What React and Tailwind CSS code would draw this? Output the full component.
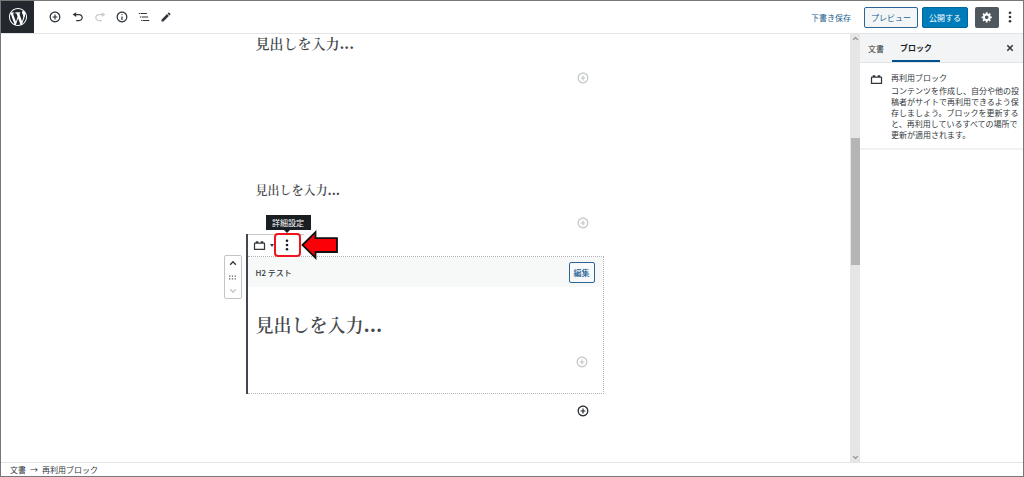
import React from "react";

const P = {
  wordpress:
    "M20 10c0-5.51-4.49-10-10-10C4.48 0 0 4.49 0 10c0 5.52 4.48 10 10 10 5.51 0 10-4.48 10-10zM7.78 15.37L4.37 6.22c.55-.02 1.17-.08 1.17-.08.5-.06.44-1.13-.06-1.11 0 0-1.45.11-2.37.11-.18 0-.37 0-.58-.01C4.12 2.69 6.87 1.11 10 1.11c2.33 0 4.45.87 6.05 2.34-.68-.11-1.65.39-1.65 1.58 0 .74.45 1.36.9 2.1.35.61.55 1.36.55 2.46 0 1.49-1.4 5-1.4 5l-3.03-8.37c.54-.02.82-.17.82-.17.5-.05.44-1.25-.06-1.22 0 0-1.44.12-2.38.12-.87 0-2.33-.12-2.33-.12-.5-.03-.56 1.2-.06 1.22l.92.08 1.26 3.41zM17.41 10c.24-.64.74-1.87.43-4.25.7 1.29 1.05 2.71 1.05 4.25 0 3.29-1.73 6.24-4.4 7.78.97-2.59 1.94-5.2 2.92-7.78zM6.1 18.09C3.12 16.65 1.11 13.53 1.11 10c0-1.3.23-2.48.72-3.59C3.25 10.3 4.67 14.2 6.1 18.09zm4.03-6.63l2.58 6.98c-.86.29-1.76.45-2.71.45-.79 0-1.57-.11-2.29-.33.81-2.38 1.62-4.74 2.42-7.1z",
  insert:
    "M10 1c-5 0-9 4-9 9s4 9 9 9 9-4 9-9-4-9-9-9zm0 16c-3.9 0-7-3.1-7-7s3.1-7 7-7 7 3.1 7 7-3.1 7-7 7zm1-11H9v3H6v2h3v3h2v-3h3V9h-3V6z",
  undo: "M12 5H7V2L1 6l6 4V7h5c2.2 0 4 1.8 4 4s-1.8 4-4 4H7v2h5c3.3 0 6-2.7 6-6s-2.7-6-6-6z",
  redo: "M8 5h5V2l6 4-6 4V7H8c-2.2 0-4 1.8-4 4s1.8 4 4 4h5v2H8c-3.3 0-6-2.7-6-6s2.7-6 6-6z",
  info: "M9 15h2V9H9v6zm1-10c-.5 0-1 .5-1 1s.5 1 1 1 1-.5 1-1-.5-1-1-1zm0-4c-5 0-9 4-9 9s4 9 9 9 9-4 9-9-4-9-9-9zm0 16c-3.9 0-7-3.1-7-7s3.1-7 7-7 7 3.1 7 7-3.1 7-7 7z",
  gear: "M18 12h-2.18c-.17.7-.44 1.35-.81 1.93l1.54 1.54-2.1 2.1-1.54-1.54c-.58.36-1.23.63-1.91.79V19H8v-2.18c-.68-.16-1.33-.43-1.91-.79l-1.54 1.54-2.12-2.12 1.54-1.54c-.36-.58-.63-1.23-.79-1.91H1V9.03h2.17c.16-.7.44-1.35.8-1.94L2.43 5.55l2.1-2.1 1.54 1.54c.58-.37 1.24-.64 1.93-.81V2h3v2.18c.68.16 1.33.43 1.91.79l1.54-1.54 2.12 2.12-1.54 1.54c.36.59.64 1.24.8 1.94H18V12zm-8.5 1.5c1.66 0 3-1.34 3-3s-1.34-3-3-3-3 1.34-3 3 1.34 3 3 3z",
  nav: "M5 5H3v2h2V5zm3 8h11v-2H8v2zm9-8H6v2h11V5zM7 11H5v2h2v-2zm0 8h2v-2H7v2zm3-2v2h11v-2H10z",
  pencil:
    "M3 17.25V21h3.75L17.81 9.94l-3.75-3.75L3 17.25zM20.71 7.04c.39-.39.39-1.02 0-1.41l-2.34-2.34c-.39-.39-1.02-.39-1.41 0l-1.83 1.83 3.75 3.75 1.83-1.83z",
  block:
    "M19 7h-1V5h-4v2h-4V5H6v2H5c-1.1 0-2 .9-2 2v10h18V9c0-1.1-.9-2-2-2zm0 10H5V9h14v8z",
};

function Icon({ name, box = 20, className }) {
  return (
    <svg viewBox={`0 0 ${box} ${box}`} className={className} fill="currentColor" aria-hidden="true">
      <path d={P[name]} />
    </svg>
  );
}

function Dots({ className }) {
  return (
    <svg viewBox="0 0 4 12" className={className} fill="currentColor" aria-hidden="true">
      <circle cx="2" cy="1.7" r="1.3" />
      <circle cx="2" cy="6" r="1.3" />
      <circle cx="2" cy="10.3" r="1.3" />
    </svg>
  );
}

function Chevron({ down, className }) {
  return (
    <svg viewBox="0 0 8 6" className={className} fill="none" stroke="currentColor" strokeWidth="1.3" aria-hidden="true">
      <path d={down ? "M1.2 1.3 4 4.2 6.8 1.3" : "M1.2 4.7 4 1.8 6.8 4.7"} />
    </svg>
  );
}

function AddRow({ className }) {
  return (
    <div className="flex justify-end pr-[15px]">
      <button aria-label="ブロックを追加" className={className}>
        <Icon name="insert" className="size-3" />
      </button>
    </div>
  );
}

const tools = [
  ["ブロックの追加", "insert", 20, "size-3 text-[#2f353b]"],
  ["元に戻す", "undo", 20, "size-3 text-[#2f353b]"],
  ["やり直す", "redo", 20, "size-3 text-[#c9cbcd]"],
  ["コンテンツ構造", "info", 20, "size-3 text-[#2f353b]"],
  ["ブロックナビゲーション", "nav", 24, "size-3.5 text-[#2f353b]"],
  ["モード", "pencil", 24, "size-3 text-[#2f353b]"],
];

const serif = "font-['DejaVu_Serif','Noto_Serif_CJK_JP','Noto_Sans_CJK_JP',serif] font-semibold text-[#45484c]";

export default function App() {
  return (
    <div className="flex h-screen flex-col overflow-hidden border border-[#777] bg-white font-['Noto_Sans_CJK_JP',sans-serif] text-[8px] leading-[11px] text-[#32373c]">
      <header className="flex h-[33px] shrink-0 items-center border-b border-[#e2e4e7] pr-[11px]">
        <a href="#" aria-label="投稿一覧" className="flex h-8 w-[33px] items-center justify-center self-start bg-[#23282e] text-white">
          <Icon name="wordpress" className="size-[18px]" />
        </a>
        <div className="ml-[9px] flex flex-1 items-center">
          {tools.map(([label, name, box, cls]) => (
            <button key={name} aria-label={label} className="flex w-[22px] items-center justify-center first:w-6">
              <Icon name={name} box={box} className={cls} />
            </button>
          ))}
        </div>
        <button className="mr-[13px] text-[#1b5e8f]">下書き保存</button>
        <button className="mr-1 h-[21px] w-[54px] rounded-[2px] border border-[#2c6593] bg-[#f3f5f6] text-[#1b5e8f]">プレビュー</button>
        <button className="mr-[7px] h-[21px] w-[46px] rounded-[2px] border border-[#006799] bg-[#007cba] text-white">公開する</button>
        <button aria-label="設定" className="mr-[9px] flex h-[21px] w-6 items-center justify-center rounded-[2px] bg-[#50575d] text-white">
          <Icon name="gear" className="size-3" />
        </button>
        <button aria-label="ツールと設定" className="text-[#2f353b]">
          <Dots className="h-3 w-1" />
        </button>
      </header>

      <div className="flex min-h-0 flex-1">
        <main className="min-w-0 flex-1 overflow-hidden pr-[2px]">
          <div className="mx-auto w-[358px]">
            <h2 className={`${serif} pl-[10px] text-[14px] leading-5`}>見出しを入力...</h2>
            <div className="pt-[18px]">
              <AddRow className="text-[#c4c7ca]" />
            </div>
            <h3 className={`${serif} mt-[99px] pl-[10px] text-[12px] leading-4`}>見出しを入力...</h3>
            <div className="pt-[18px]">
              <AddRow className="text-[#c4c7ca]" />
            </div>

            <section className="relative mt-[5px] border-l-2 border-[#40474e]">
              <div className="flex h-[22px] w-14 items-center border-t border-[#c4c7ca] pl-1">
                <button aria-label="ブロックタイプを変更" className="flex items-center gap-[3px]">
                  <Icon name="block" box={24} className="size-[15px]" />
                  <svg viewBox="0 0 4 3" className="h-[3px] w-1" fill="currentColor" aria-hidden="true">
                    <path d="M0 0h4L2 3z" />
                  </svg>
                </button>
              </div>
              <div className="border border-l-0 border-dotted border-[#b0b4b8] pb-[25px]">
                <div className="flex h-[30px] items-center justify-between bg-[#f7f9f9] pr-2 pl-2">
                  <b className="font-medium">H2 テスト</b>
                  <button className="h-[21px] w-[26px] rounded-[2px] border border-[#2c6593] bg-[#f7f9fb] font-medium text-[#1b5e8f]">編集</button>
                </div>
                <h2 className={`${serif} mt-[27px] pl-2 text-[18px] leading-6`}>見出しを入力...</h2>
                <div className="pt-[18px]">
                  <AddRow className="text-[#c4c7ca]" />
                </div>
              </div>

              <div className="absolute top-[21px] -left-6 flex h-[44px] w-[18px] flex-col items-center justify-between rounded-[2px] border border-[#c2c5c8] bg-white py-1">
                <button aria-label="上に移動"><Chevron className="h-[6px] w-2" /></button>
                <button aria-label="ドラッグ">
                  <svg viewBox="0 0 7 5" className="h-[5px] w-[7px]" fill="#5c6268" aria-hidden="true">
                    <path d="M0 .5h1.3v1.3H0zM2.8.5h1.3v1.3H2.8zM5.6.5h1.3v1.3H5.6zM0 3.2h1.3v1.3H0zM2.8 3.2h1.3v1.3H2.8zM5.6 3.2h1.3v1.3H5.6z" />
                  </svg>
                </button>
                <button aria-label="下に移動" className="text-[#c4c7ca]"><Chevron down className="h-[6px] w-2" /></button>
              </div>

              <button aria-label="詳細設定" className="absolute -top-px left-[26px] flex h-6 w-[27px] items-center justify-center rounded-[4px] border-2 border-[#f0141e] bg-white text-[#191e23]">
                <Dots className="h-3 w-1" />
              </button>
              <div role="tooltip" className="absolute -top-[19px] left-[18px] flex h-[15px] w-[45px] items-center justify-center bg-[#191e23] text-white">
                詳細設定
                <svg viewBox="0 0 6 3" className="absolute top-full left-[18px] h-[3px] w-[6px]" fill="#191e23" aria-hidden="true">
                  <path d="M0 0h6L3 3z" />
                </svg>
              </div>
              <svg viewBox="0 0 38 30" className="absolute -top-[4px] left-[53px] h-[30px] w-[38px]" aria-hidden="true">
                <path d="M1.5 15 14.5 2.2V8.2H36V22H14.5V27.8Z" fill="#fb0007" stroke="#101010" strokeWidth="1.8" />
              </svg>
            </section>
            <div className="mt-[11px]">
              <AddRow className="text-[#23282d]" />
            </div>
          </div>
        </main>

        <div className="flex w-[10px] shrink-0 flex-col items-center bg-[#e6e6e6] text-[#8c8c8c]" aria-hidden="true">
          <Chevron className="mt-[2px] h-[5px] w-[7px]" />
          <div className="mt-[97px] h-[127px] w-[9px] bg-[#b5b5b5]" />
          <Chevron down className="mt-auto mb-[2px] h-[5px] w-[7px]" />
        </div>

        <aside className="w-[163px] shrink-0">
          <div className="flex h-[29px] items-stretch border-b border-[#e2e4e7] bg-[#f3f4f5] pr-[9px]">
            <button className="w-8">文書</button>
            <button className="w-12 border-b-2 border-[#00518c] font-bold text-[#191e23]">ブロック</button>
            <button aria-label="設定を閉じる" className="ml-auto">
              <svg viewBox="0 0 8 8" className="size-2" stroke="currentColor" strokeWidth="1.6" aria-hidden="true">
                <path d="M1.3 1.3l5.4 5.4M6.7 1.3 1.3 6.7" />
              </svg>
            </button>
          </div>
          <div className="flex gap-[7px] border-b-2 border-[#f0f1f2] pt-[9px] pb-2 pl-[9px]">
            <Icon name="block" box={24} className="size-[15px] shrink-0" />
            <div className="flex-1">
              <h2>再利用ブロック</h2>
              <p className="mt-[2px]">コンテンツを作成し、自分や他の投稿者がサイトで再利用できるよう保存しましょう。ブロックを更新すると、再利用しているすべての場所で更新が適用されます。</p>
            </div>
          </div>
        </aside>
      </div>

      <footer className="flex h-[14px] shrink-0 items-center gap-1 border-t border-[#e2e4e7] pl-[9px]">
        <button>文書</button>
        <span>→</span>
        <button>再利用ブロック</button>
      </footer>
    </div>
  );
}
